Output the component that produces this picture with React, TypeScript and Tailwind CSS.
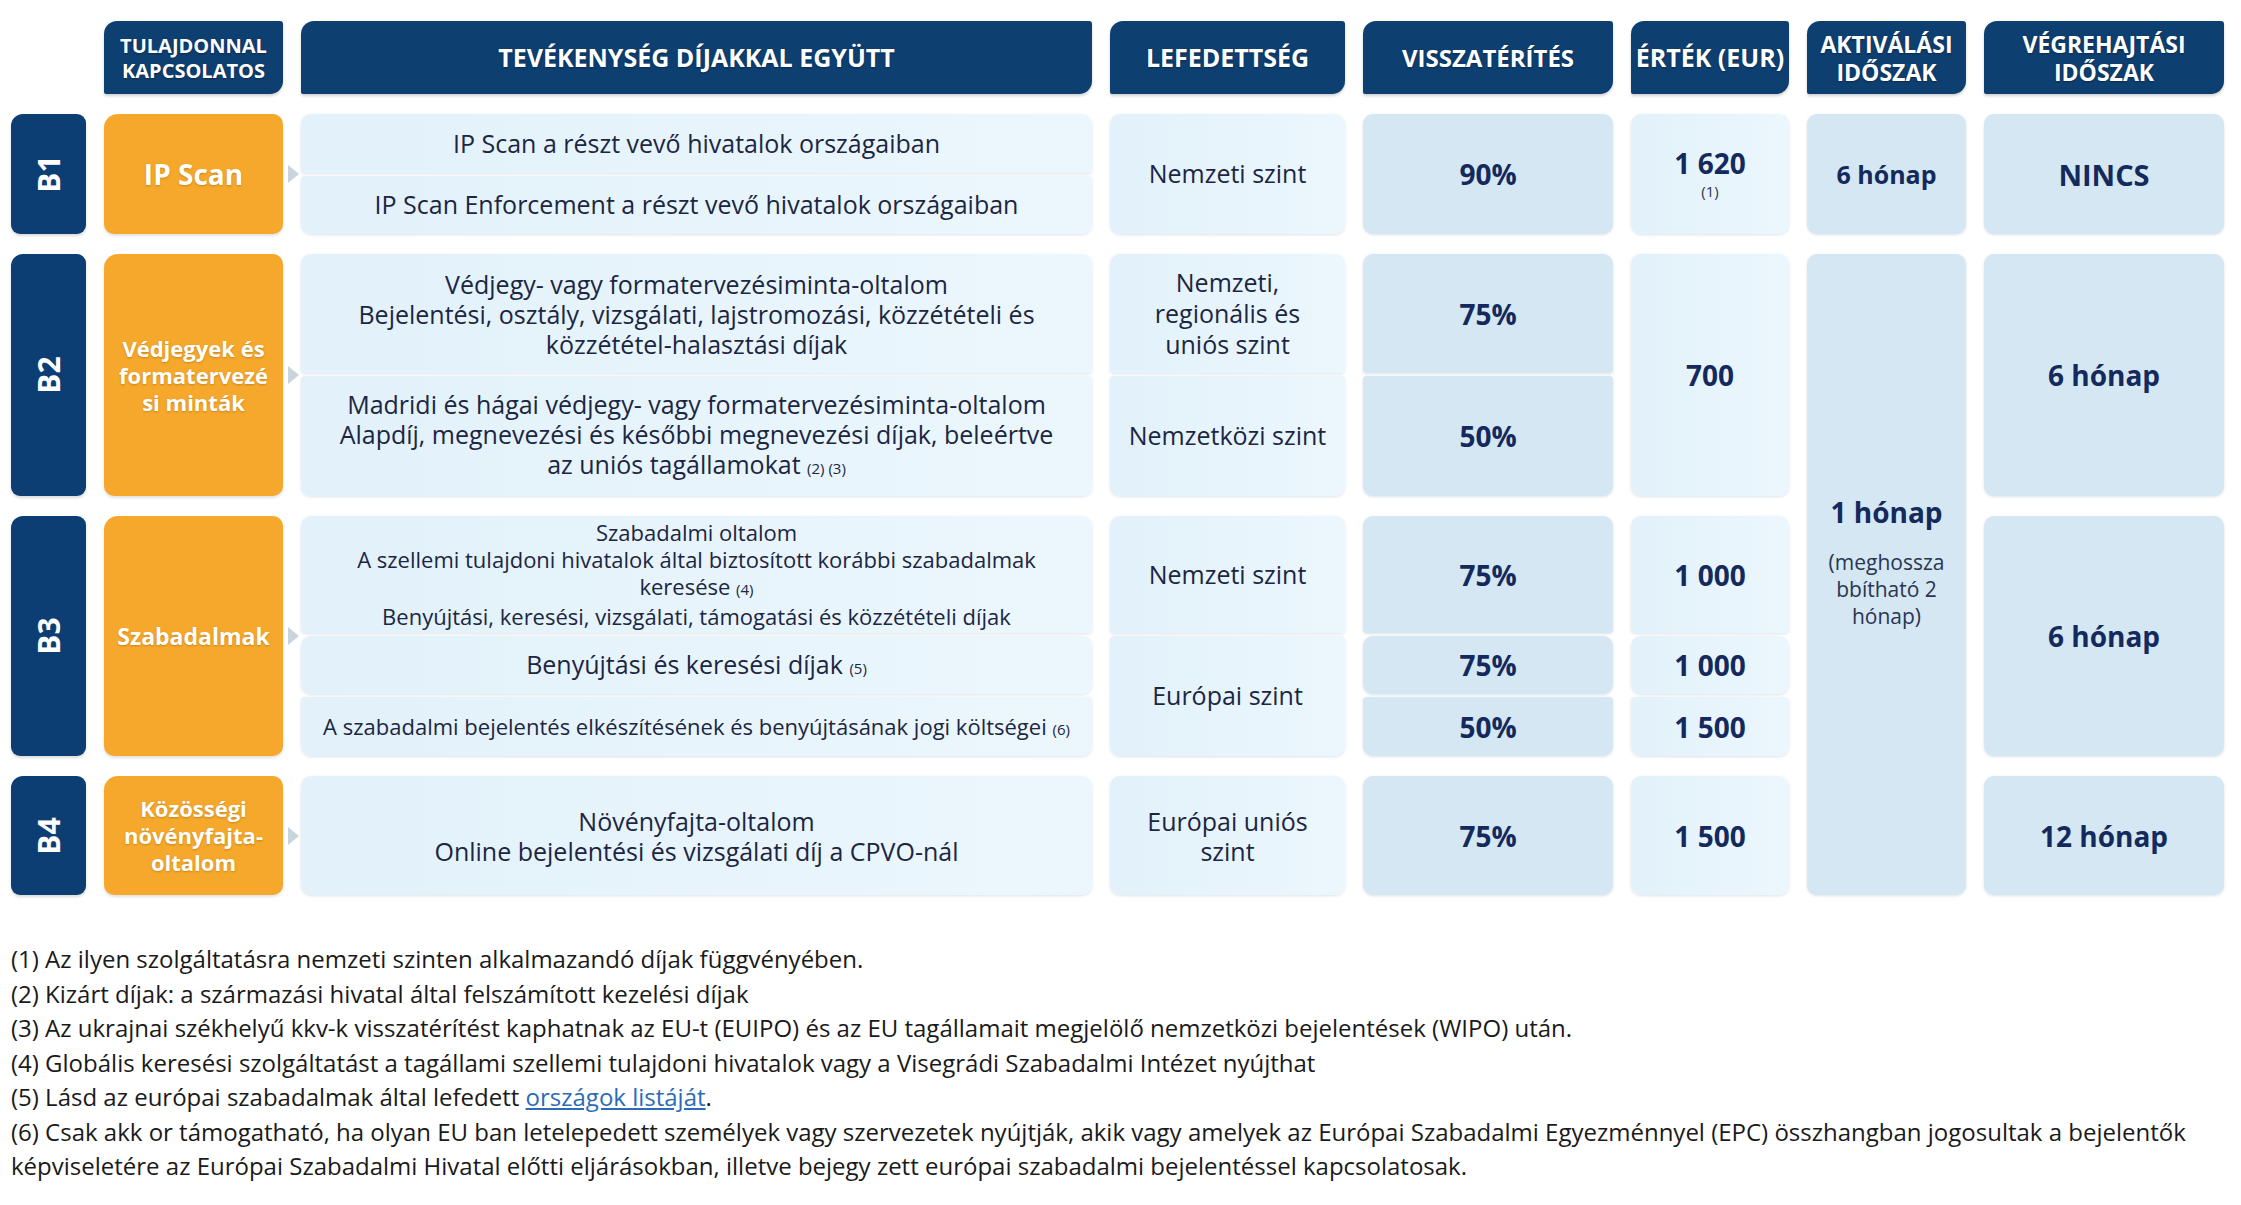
import React from "react";

const head =
  "bg-[#0e3f71] text-white font-bold uppercase flex items-center justify-center text-center rounded-tl-[13px] rounded-br-[13px] rounded-tr-[3px] rounded-bl-[2px] shadow-[0_2px_3px_rgba(0,0,0,0.18)] [text-shadow:0_1px_2px_rgba(0,0,0,0.35)]";
const light =
  "bg-gradient-to-r from-[#e2f1fa] to-[#ecf7fd] rounded-[10px] shadow-[0_1px_3px_rgba(60,90,120,0.18)] flex flex-col items-center justify-center text-center text-[#1c2642]";
const mid =
  "bg-[#d4e7f3] rounded-[10px] shadow-[0_1px_3px_rgba(60,90,120,0.18)] flex flex-col items-center justify-center text-center text-[#14295c]";
const badge =
  "bg-[#0d3e73] rounded-[9px] rounded-tl-[12px] flex items-center justify-center shadow-[0_2px_3px_rgba(0,0,0,0.15)]";
const orange =
  "relative bg-[#f5a82b] rounded-[10px] rounded-tl-[14px] flex items-center justify-center text-center text-white font-bold [text-shadow:0_1px_2px_rgba(120,70,0,0.35)] shadow-[0_2px_3px_rgba(0,0,0,0.12)]";
const val = "font-bold text-[28px] leading-none text-[#14295c]";
const note = "text-[15px] align-baseline";

function Arrow() {
  return (
    <svg className="absolute right-[-16px] top-1/2 -translate-y-1/2" width="11" height="18" viewBox="0 0 11 18">
      <path d="M0 0 L11 9 L0 18 Z" fill="#c9d4dc" />
    </svg>
  );
}

function B({ label, cls }: { label: string; cls: string }) {
  return (
    <div className={`${badge} ${cls}`}>
      <span className="-rotate-90 text-white font-bold text-[30px] leading-none whitespace-nowrap">{label}</span>
    </div>
  );
}

export default function App() {
  return (
    <div className="w-[2241px] min-h-[1205px] bg-white font-['Open_Sans',sans-serif] text-[#1c2642]">
      <div className="pt-[21px] pl-[11px]">
        <div className="grid grid-cols-[75px_179px_791px_235px_250px_158px_159px_240px] grid-rows-[73px_14px_59px_58px_14px_119px_120px_14px_117px_58px_59px_14px_119px] gap-x-[18px] gap-y-[3px]">
          {/* header */}
          <div className={`${head} col-start-2 row-start-1 text-[20px] leading-[25px]`}>
            Tulajdonnal<br />kapcsolatos
          </div>
          <div className={`${head} col-start-3 row-start-1 text-[25px]`}>Tevékenység díjakkal együtt</div>
          <div className={`${head} col-start-4 row-start-1 text-[25px]`}>Lefedettség</div>
          <div className={`${head} col-start-5 row-start-1 text-[24px]`}>Visszatérítés</div>
          <div className={`${head} col-start-6 row-start-1 text-[25px] whitespace-nowrap`}>Érték (EUR)</div>
          <div className={`${head} col-start-7 row-start-1 text-[23px] leading-[28px]`}>
            Aktiválási<br />időszak
          </div>
          <div className={`${head} col-start-8 row-start-1 text-[23px] leading-[28px]`}>
            Végrehajtási<br />időszak
          </div>

          {/* B1 */}
          <B label="B1" cls="col-start-1 row-start-3 row-span-2" />
          <div className={`${orange} col-start-2 row-start-3 row-span-2 text-[28px]`}>
            IP Scan
            <Arrow />
          </div>
          <div className={`${light} col-start-3 row-start-3 text-[25px] rounded-b-[4px]`}>IP Scan a részt vevő hivatalok országaiban</div>
          <div className={`${light} col-start-3 row-start-4 text-[25px] rounded-t-[4px]`}>IP Scan Enforcement a részt vevő hivatalok országaiban</div>
          <div className={`${light} col-start-4 row-start-3 row-span-2 text-[25px]`}>Nemzeti szint</div>
          <div className={`${mid} col-start-5 row-start-3 row-span-2`}>
            <span className={val}>90%</span>
          </div>
          <div className={`${light} col-start-6 row-start-3 row-span-2 pt-[4px]`}>
            <span className={val}>1 620</span>
            <span className="text-[15px] mt-[3px] text-[#2a3550]">(1)</span>
          </div>
          <div className={`${mid} col-start-7 row-start-3 row-span-2`}>
            <span className="font-bold text-[25px] leading-none">6 hónap</span>
          </div>
          <div className={`${mid} col-start-8 row-start-3 row-span-2`}>
            <span className="font-bold text-[29px] leading-none">NINCS</span>
          </div>

          {/* B2 */}
          <B label="B2" cls="col-start-1 row-start-6 row-span-2" />
          <div className={`${orange} col-start-2 row-start-6 row-span-2 text-[22px] leading-[27px]`}>
            <span>
              Védjegyek és<br />formatervezé<br />si minták
            </span>
            <Arrow />
          </div>
          <div className={`${light} col-start-3 row-start-6 text-[25px] leading-[30px] rounded-b-[4px]`}>
            <span>Védjegy- vagy formatervezésiminta-oltalom</span>
            <span>Bejelentési, osztály, vizsgálati, lajstromozási, közzétételi és</span>
            <span>közzététel-halasztási díjak</span>
          </div>
          <div className={`${light} col-start-3 row-start-7 text-[25px] leading-[30px] rounded-t-[4px]`}>
            <span>Madridi és hágai védjegy- vagy formatervezésiminta-oltalom</span>
            <span>Alapdíj, megnevezési és későbbi megnevezési díjak, beleértve</span>
            <span>
              az uniós tagállamokat <span className={note}>(2) (3)</span>
            </span>
          </div>
          <div className={`${light} col-start-4 row-start-6 text-[25px] leading-[31px] rounded-b-[4px]`}>
            <span>Nemzeti,</span>
            <span>regionális és</span>
            <span>uniós szint</span>
          </div>
          <div className={`${light} col-start-4 row-start-7 text-[25px] rounded-t-[4px]`}>Nemzetközi szint</div>
          <div className={`${mid} col-start-5 row-start-6 rounded-b-[4px]`}>
            <span className={val}>75%</span>
          </div>
          <div className={`${mid} col-start-5 row-start-7 rounded-t-[4px]`}>
            <span className={val}>50%</span>
          </div>
          <div className={`${light} col-start-6 row-start-6 row-span-2`}>
            <span className={val}>700</span>
          </div>
          <div className={`${mid} col-start-7 row-start-6 row-span-8 !justify-start pt-[244px]`}>
            <span className="font-bold text-[28px] leading-none">1 hónap</span>
            <span className="text-[21px] leading-[27px] text-[#2a3550] mt-[23px]">
              (meghossza
              <br />
              bbítható 2
              <br />
              hónap)
            </span>
          </div>
          <div className={`${mid} col-start-8 row-start-6 row-span-2`}>
            <span className={val}>6 hónap</span>
          </div>

          {/* B3 */}
          <B label="B3" cls="col-start-1 row-start-9 row-span-3" />
          <div className={`${orange} col-start-2 row-start-9 row-span-3 text-[23px]`}>
            Szabadalmak
            <Arrow />
          </div>
          <div className={`${light} col-start-3 row-start-9 text-[22px] leading-[27px] rounded-b-[4px]`}>
            <span>Szabadalmi oltalom</span>
            <span>A szellemi tulajdoni hivatalok által biztosított korábbi szabadalmak</span>
            <span>
              keresése <span className={note}>(4)</span>
            </span>
            <span>Benyújtási, keresési, vizsgálati, támogatási és közzétételi díjak</span>
          </div>
          <div className={`${light} col-start-3 row-start-10 text-[25px] rounded-[4px]`}>
            <span>
              Benyújtási és keresési díjak <span className={note}>(5)</span>
            </span>
          </div>
          <div className={`${light} col-start-3 row-start-11 text-[22px] rounded-t-[4px]`}>
            <span>
              A szabadalmi bejelentés elkészítésének és benyújtásának jogi költségei <span className={note}>(6)</span>
            </span>
          </div>
          <div className={`${light} col-start-4 row-start-9 text-[25px] rounded-b-[4px]`}>Nemzeti szint</div>
          <div className={`${light} col-start-4 row-start-10 row-span-2 text-[25px] rounded-t-[4px]`}>Európai szint</div>
          <div className={`${mid} col-start-5 row-start-9 rounded-b-[4px]`}>
            <span className={val}>75%</span>
          </div>
          <div className={`${mid} col-start-5 row-start-10 rounded-[4px]`}>
            <span className={val}>75%</span>
          </div>
          <div className={`${mid} col-start-5 row-start-11 rounded-t-[4px]`}>
            <span className={val}>50%</span>
          </div>
          <div className={`${light} col-start-6 row-start-9 rounded-b-[4px]`}>
            <span className={val}>1 000</span>
          </div>
          <div className={`${light} col-start-6 row-start-10 rounded-[4px]`}>
            <span className={val}>1 000</span>
          </div>
          <div className={`${light} col-start-6 row-start-11 rounded-t-[4px]`}>
            <span className={val}>1 500</span>
          </div>
          <div className={`${mid} col-start-8 row-start-9 row-span-3`}>
            <span className={val}>6 hónap</span>
          </div>

          {/* B4 */}
          <B label="B4" cls="col-start-1 row-start-13" />
          <div className={`${orange} col-start-2 row-start-13 text-[22px] leading-[27px]`}>
            <span>
              Közösségi<br />növényfajta-<br />oltalom
            </span>
            <Arrow />
          </div>
          <div className={`${light} col-start-3 row-start-13 text-[25px] leading-[30px]`}>
            <span>Növényfajta-oltalom</span>
            <span>Online bejelentési és vizsgálati díj a CPVO-nál</span>
          </div>
          <div className={`${light} col-start-4 row-start-13 text-[25px] leading-[30px]`}>
            <span>Európai uniós</span>
            <span>szint</span>
          </div>
          <div className={`${mid} col-start-5 row-start-13`}>
            <span className={val}>75%</span>
          </div>
          <div className={`${light} col-start-6 row-start-13`}>
            <span className={val}>1 500</span>
          </div>
          <div className={`${mid} col-start-8 row-start-13`}>
            <span className={val}>12 hónap</span>
          </div>
        </div>
      </div>

      <div className="mt-[47px] pl-[11px] text-[24px] leading-[34.5px] text-[#1a1a1a]">
        <p>(1) Az ilyen szolgáltatásra nemzeti szinten alkalmazandó díjak függvényében.</p>
        <p>(2) Kizárt díjak: a származási hivatal által felszámított kezelési díjak</p>
        <p>(3) Az ukrajnai székhelyű kkv-k visszatérítést kaphatnak az EU-t (EUIPO) és az EU tagállamait megjelölő nemzetközi bejelentések (WIPO) után.</p>
        <p>(4) Globális keresési szolgáltatást a tagállami szellemi tulajdoni hivatalok vagy a Visegrádi Szabadalmi Intézet nyújthat</p>
        <p>
          (5) Lásd az európai szabadalmak által lefedett{" "}
          <a href="#" className="text-[#2b6cb5] underline underline-offset-2">
            országok listáját
          </a>
          .
        </p>
        <p>
          <span className="whitespace-nowrap">
            (6) Csak akk or támogatható, ha olyan EU ban letelepedett személyek vagy szervezetek nyújtják, akik vagy amelyek az Európai Szabadalmi Egyezménnyel (EPC) összhangban jogosultak a bejelentők
          </span>
          <br />
          képviseletére az Európai Szabadalmi Hivatal előtti eljárásokban, illetve bejegy zett európai szabadalmi bejelentéssel kapcsolatosak.
        </p>
      </div>
    </div>
  );
}
